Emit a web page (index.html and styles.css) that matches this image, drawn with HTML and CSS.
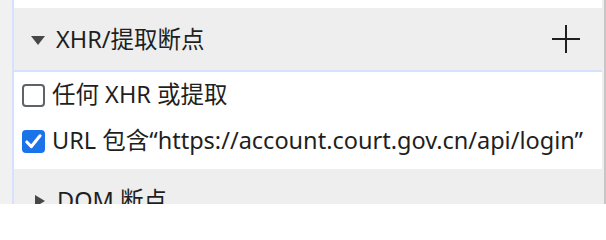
FILE: index.html
```html
<!DOCTYPE html>
<html lang="zh-CN">
<head>
<meta charset="utf-8">
<title>XHR/提取断点</title>
<link rel="stylesheet" href="styles.css">
</head>
<body>
<div class="frame">
  <div class="gutter"></div>
  <div class="panel">
    <div class="top-row"></div>
    <section class="pane">
      <div class="pane-header">
        <span class="tri tri-down"></span>
        <span class="pane-title">XHR/提取断点</span>
        <svg class="plus" width="28" height="28" viewBox="0 0 28 28" aria-hidden="true">
          <path d="M14 0V28M0 14H28" stroke="#1f1f1f" stroke-width="2" fill="none"/>
        </svg>
      </div>
      <div class="pane-body">
        <label class="bp-row">
          <span class="cb"></span>
          <span class="bp-text">任何 XHR 或提取</span>
        </label>
        <label class="bp-row">
          <span class="cb checked">
            <svg width="24" height="24" viewBox="0 0 24 24" aria-hidden="true">
              <path d="M5 12.5L9.8 17.3L18.8 6" stroke="#fff" stroke-width="3.2" fill="none" stroke-linecap="round" stroke-linejoin="round"/>
            </svg>
          </span>
          <span class="bp-text">URL 包含“https://account.court.gov.cn/api/login”</span>
        </label>
      </div>
    </section>
    <section class="pane">
      <div class="pane-header">
        <span class="tri tri-right"></span>
        <span class="pane-title title-dom">DOM 断点</span>
      </div>
    </section>
  </div>
  <div class="track"></div>
  <div class="edge"></div>
</div>
</body>
</html>
```

FILE: styles.css
```css
html, body {
  margin: 0;
  padding: 0;
  background: #ffffff;
  overflow: hidden;
}
body {
  font-family: "Noto Sans", "Noto Sans CJK SC", sans-serif;
  font-size: 23.5px;
  color: #1f1f1f;
}
.frame {
  display: flex;
  width: 606px;
  height: 204px;
  overflow: hidden;
}
.gutter {
  width: 12px;
  flex: none;
  background: #f1f1f1;
  border-right: 2px solid #d6e2fb;
}
.panel {
  flex: 1;
  min-width: 0;
  display: flex;
  flex-direction: column;
  background: #ffffff;
}
.track {
  width: 2px;
  flex: none;
  background: #eeeeee;
}
.edge {
  width: 2px;
  flex: none;
  background: #c6c6c6;
}
.top-row {
  height: 8px;
  flex: none;
  background: #ffffff;
}
.pane-header {
  height: 62px;
  box-sizing: border-box;
  flex: none;
  display: flex;
  align-items: center;
  background: #eeeeee;
  padding: 2px 22px 0 17px;
}
.pane-body {
  border-top: 2px solid #d6e2fb;
  padding: 0 0 5px 8px;
  background: #ffffff;
}
.tri {
  flex: none;
  width: 0;
  height: 0;
}
.tri-down {
  border-left: 7px solid transparent;
  border-right: 7px solid transparent;
  border-top: 9px solid #474747;
  margin: 0 11px 0 0;
}
.tri-right {
  border-top: 6px solid transparent;
  border-bottom: 6px solid transparent;
  border-left: 10px solid #474747;
  margin: 0 12px 0 4px;
}
.pane-title {
  flex: 1;
  white-space: nowrap;
  line-height: 1;
}
.plus {
  flex: none;
  display: block;
  margin-top: -3px;
}
.bp-row {
  height: 46px;
  display: flex;
  align-items: center;
  gap: 7px;
  white-space: nowrap;
}
.cb {
  flex: none;
  width: 23px;
  height: 23px;
  box-sizing: border-box;
  border: 2px solid #5f6368;
  border-radius: 4px;
  background: #ffffff;
  display: flex;
  align-items: center;
  justify-content: center;
}
.cb.checked {
  border: none;
  background: #1a73e8;
}
.cb svg {
  display: block;
  width: 23px;
  height: 23px;
}
.bp-text {
  line-height: 1;
}
```
